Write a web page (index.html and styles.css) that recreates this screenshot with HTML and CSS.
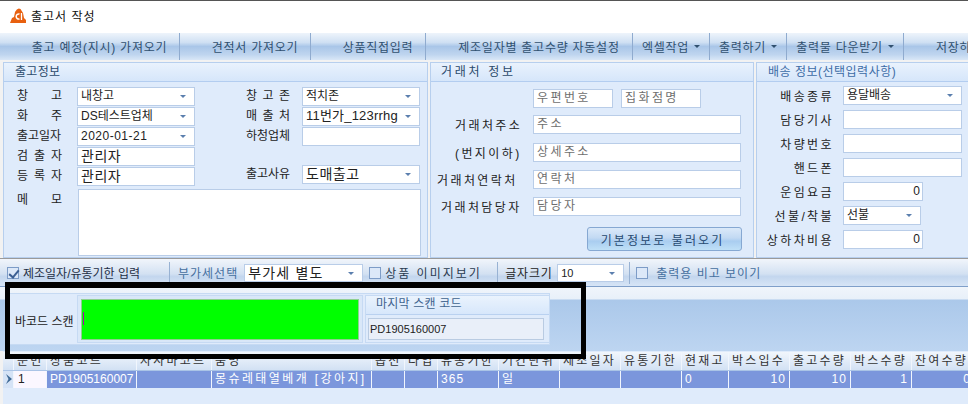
FILE: index.html
```html
<!DOCTYPE html>
<html lang="ko">
<head>
    <meta charset="UTF-8">
    <title>출고서 작성</title>
    <link rel="stylesheet" href="styles.css">
</head>
<body>
    <div class="window">
        <div class="titlebar">
            <svg class="logo" width="16" height="15" viewBox="0 0 16 15"><path d="M0 15 L2 10 L4 9 L5 4 Q7.5 -1 10.5 1 L13 5 L14 10 L16 12 L16 15 Z" fill="#e8600f"/><path d="M9.5 6 A2.6 2.6 0 1 0 9.5 11" fill="none" stroke="#fff" stroke-width="1.5"/><path d="M11.5 5 V12" stroke="#fff" stroke-width="1.3"/></svg>
            <span>출고서 작성</span>
        </div>

        <div class="toolbar">
            <div class="tool t1">출고 예정(지시) 가져오기</div>
            <div class="tool t2">견적서 가져오기</div>
            <div class="tool t3">상품직접입력</div>
            <div class="tool t4">제조일자별 출고수량 자동설정</div>
            <div class="tool t5">엑셀작업<i class="caret dark"></i></div>
            <div class="tool t5">출력하기<i class="caret dark"></i></div>
            <div class="tool t6">출력물 다운받기<i class="caret dark"></i></div>
            <div class="tool t7">저장하기</div>
        </div>

        <div class="panels">
            <section class="panel p-out">
                <h3>출고정보</h3>
                <div class="out-grid">
                    <label class="spread">창 고</label>
                    <div class="field combo">내창고<i class="caret"></i></div>
                    <label class="spread col2">창 고 존</label>
                    <div class="field combo">적치존<i class="caret"></i></div>

                    <label class="spread">화 주</label>
                    <div class="field combo">DS테스트업체<i class="caret"></i></div>
                    <label class="spread col2">매 출 처</label>
                    <div class="field combo mid">11번가_123rrhg<i class="caret"></i></div>

                    <label class="spread">출고일자</label>
                    <div class="field combo date">2020-01-21<i class="caret"></i></div>
                    <label class="spread col2">하청업체</label>
                    <div class="field"></div>

                    <label class="spread">검 출 자</label>
                    <div class="field big">관리자</div>
                    <span></span>
                    <span></span>

                    <label class="spread">등 록 자</label>
                    <div class="field big">관리자</div>
                    <label class="spread col2 up">출고사유</label>
                    <div class="field combo big up">도매출고<i class="caret"></i></div>
                </div>
                <div class="memo-row">
                    <label class="spread">메 모</label>
                    <div class="field memo"></div>
                </div>
            </section>

            <section class="panel p-cust">
                <h3 class="spaced">거래처 정보</h3>
                <div class="cust-top">
                    <div class="field hint">우편번호</div>
                    <div class="field hint">집화점명</div>
                </div>
                <div class="cust-row addr"><label class="l-addr">거래처주소</label><div class="field hint">주소</div></div>
                <div class="cust-row"><label class="l-addr">(번지이하)</label><div class="field hint">상세주소</div></div>
                <div class="cust-row"><label class="l-tel">거래처연락처</label><div class="field hint">연락처</div></div>
                <div class="cust-row"><label class="l-man">거래처담당자</label><div class="field hint">담당자</div></div>
                <div class="btn-row"><button type="button">기본정보로 불러오기</button></div>
            </section>

            <section class="panel p-ship">
                <h3 class="blue">배송 정보(선택입력사항)</h3>
                <div class="ship-row first"><label>배송종류</label><div class="field combo w-full">용달배송<i class="caret"></i></div></div>
                <div class="ship-row"><label>담당기사</label><div class="field w-full"></div></div>
                <div class="ship-row"><label>차량번호</label><div class="field w-full"></div></div>
                <div class="ship-row"><label>핸드폰</label><div class="field w-full"></div></div>
                <div class="ship-row"><label>운임요금</label><div class="field num w-short">0</div></div>
                <div class="ship-row"><label>선불/착불</label><div class="field combo w-short2">선불<i class="caret"></i></div></div>
                <div class="ship-row"><label>상하차비용</label><div class="field num w-short">0</div></div>
            </section>
        </div>

        <div class="optbar">
            <span class="check on"></span><span class="opt-a">제조일자/유통기한 입력</span>
            <span class="sep sep-a"></span>
            <span class="opt-blue">부가세선택</span>
            <div class="field combo big opt-combo">부가세 별도<i class="caret"></i></div>
            <span class="check"></span><span class="opt-b">상품 이미지보기</span>
            <span class="sep sep-b"></span>
            <span class="opt-c">글자크기</span>
            <div class="field combo size-combo">10<i class="caret"></i></div>
            <span class="sep sep-c"></span>
            <span class="check"></span><span class="opt-blue opt-d">출력용 비고 보이기</span>
        </div>

        <div class="scanbar">
            <div class="scan-box">
                <span class="scan-label">바코드 스캔</span>
                <div class="scan-input"><div class="scan-green"><i></i></div></div>
                <div class="last-scan">
                    <h4>마지막 스캔 코드</h4>
                    <div class="last-code">PD1905160007</div>
                </div>
            </div>
            <div class="black-frame"></div>
        </div>

        <div class="grid">
            <div class="g-row g-head">
                <div class="mark"></div>
                <div class="c1">순번</div><div class="c2">상품코드</div><div class="c3">자사바코드</div><div class="c4">품명</div>
                <div class="c5">옵션</div><div class="c6">타입</div><div class="c7">유통기한</div><div class="c8">기간단위</div>
                <div class="c9">제조일자</div><div class="c10">유통기한</div><div class="c11">현재고</div><div class="c12">박스입수</div>
                <div class="c13">출고수량</div><div class="c14">박스수량</div><div class="c15">잔여수량</div>
            </div>
            <div class="g-row g-data">
                <div class="mark"><svg width="8" height="10" viewBox="0 0 8 10"><path d="M1 0 L7 5 L1 10 L3.5 5 Z" fill="#3f6a96"/></svg></div>
                <div class="c1 first-cell">1</div><div class="c2">PD1905160007</div><div class="c3"></div><div class="c4">몽슈레태열베개 [강아지]</div>
                <div class="c5"></div><div class="c6"></div><div class="c7">365</div><div class="c8">일</div>
                <div class="c9"></div><div class="c10"></div><div class="c11">0</div><div class="c12 r">10</div>
                <div class="c13 r">10</div><div class="c14 r">1</div><div class="c15 r">0</div>
            </div>
        </div>
    </div>
</body>
</html>
```

FILE: styles.css
```css
* { box-sizing: border-box; }
html, body { margin: 0; padding: 0; }
body { width: 968px; height: 404px; overflow: hidden; background: #fff; font-family: "Liberation Sans", "Noto Sans CJK KR", sans-serif; font-size: 12px; color: #222; }
.window { width: 968px; height: 404px; overflow: hidden; border-top: 1px solid #555; }

.titlebar { height: 32px; display: flex; align-items: center; padding: 0 0 4px 10px; font-size: 12px; letter-spacing: 1px; color: #111; background: #fff; }
.logo { margin-right: 5px; }

.toolbar { height: 27px; display: flex; overflow: hidden; color: #30506f; font-size: 12px; background: linear-gradient(#eef4fb 0, #cfe0f3 35%, #a9c6e8 50%, #bfd5ef 80%, #d9e7f7 100%); }
.tool { flex: none; display: flex; align-items: center; justify-content: center; white-space: nowrap; letter-spacing: .75px; border-right: 1px solid #8fabcf; }
.t1 { width: 180px; padding-left: 20px; }
.t2 { width: 131px; padding-left: 20px; }
.t3 { width: 115px; padding-left: 20px; }
.t4 { width: 207px; padding-left: 20px; }
.t5 { width: 77px; }
.t6 { width: 117px; }
.t7 { width: 80px; border-right: 0; justify-content: flex-start; padding-left: 32px; }
.caret { display: inline-block; width: 0; height: 0; border: 3px solid transparent; border-top: 3px solid #5b7fae; border-bottom: 0; margin-left: 5px; }
.caret.dark { border-top-color: #30506f; }

.panels { height: 199px; display: flex; gap: 2px; padding: 2px 0 0 3px; background: #f2f2f2; border-bottom: 1px solid #9a9a9a; }
.panel { background: #dfebfb; border: 1px solid #b7cfee; flex: none; }
.panel h3 { margin: 0; height: 19px; font-size: 12px; font-weight: normal; line-height: 18px; padding-left: 11px; letter-spacing: .3px; color: #2b4a6b; background: linear-gradient(#e9f2fd, #d6e6fa); border-bottom: 1px solid #b3cdf0; }
.panel h3.spaced { letter-spacing: 2.7px; padding-left: 10px; }
.panel h3.blue { color: #3d6ca6; padding-left: 11px; letter-spacing: .5px; }
.p-out { width: 425px; }
.p-cust { width: 324px; }
.p-ship { width: 214px; }

label { white-space: nowrap; color: #222; }
.field { background: #fff; border: 1px solid #b9cde8; height: 19px; line-height: 16px; padding: 0 3px; white-space: nowrap; overflow: hidden; position: relative; color: #222; }
.combo .caret { position: absolute; right: 8px; top: 7px; margin: 0; }
.big { font-size: 14px; letter-spacing: .5px; line-height: 17px; }
.mid { font-size: 13px; letter-spacing: .2px; }
.date { letter-spacing: .5px; }
.hint { color: #6e6e6e; letter-spacing: 2.4px; line-height: 16px; }

.out-grid { display: grid; grid-template-columns: 73px 118px 107px 118px; grid-auto-rows: 20px; padding: 5px 0 0; }
.spread { display: block; width: 45px; margin-left: 13px; line-height: 18px; text-align-last: justify; }
.out-grid .col2 { width: 44px; margin-left: 51px; }
.out-grid .up { margin-top: -2px; }
.memo-row { display: flex; padding-top: 2px; }
.memo-row .spread { flex: none; margin-right: 16px; padding-top: 2px; }
.field.memo { width: 343px; height: 67px; }

.cust-top { display: flex; gap: 8px; padding: 7px 0 7px 102px; }
.cust-top .field { width: 80px; }
.cust-row { display: flex; align-items: center; height: 19px; margin-bottom: 8px; }
.cust-row.addr { margin-bottom: 9px; }
.cust-row label { flex: none; width: 102px; letter-spacing: 2.4px; }
.l-addr { padding-left: 24px; }
.l-tel { padding-left: 6px; }
.l-man { padding-left: 10px; }
.cust-row .field { width: 208px; }
.btn-row { display: flex; justify-content: flex-end; padding: 3px 11px 0 0; }
button { width: 155px; height: 24px; font: inherit; font-size: 12px; letter-spacing: 2.1px; color: #274a70; border: 1px solid #86a8d2; border-radius: 3px; background: linear-gradient(#dbe9f9, #c2d9f3 45%, #a9cdf0 60%, #bfe0f7); padding: 0 4px 0 0; }

.ship-row { display: flex; align-items: center; height: 19px; margin-bottom: 5px; }
.ship-row.first { margin-top: 4px; }
.ship-row label { width: 77px; text-align: right; letter-spacing: 2.4px; margin-right: 9px; }
.w-full { width: 119px; }
.w-short { width: 80px; }
.w-short2 { width: 78px; }
.num { text-align: right; padding-right: 2px; }

.optbar { height: 28px; display: flex; align-items: center; padding: 0 0 0 7px; white-space: nowrap; border-bottom: 1px solid #7f9fc9; background: linear-gradient(#f1f5fb, #d3e1f2 55%, #c3d6ee 65%, #d7e5f6); }
.check { flex: none; width: 12px; height: 12px; background: #dce8f8; border: 1px solid #7d9cc7; position: relative; }
.check.on::after { content: ""; position: absolute; left: 3px; top: 0; width: 4px; height: 8px; border: solid #3c5f93; border-width: 0 2px 2px 0; transform: rotate(40deg); }
.sep { flex: none; width: 1px; height: 22px; background: #98b2d3; }
.opt-a { margin-left: 4px; width: 146px; color: #1e2f45; flex: none; }
.sep-a { margin-right: 8px; }
.opt-blue { color: #456f9f; letter-spacing: 1px; flex: none; }
.opt-combo { width: 119px; margin: 0 6px; height: 18px; letter-spacing: 1.2px; }
.opt-b { margin-left: 4px; width: 112px; letter-spacing: 2px; flex: none; color: #2a3b50; }
.sep-b { margin-right: 7px; }
.opt-c { width: 52px; flex: none; color: #222; letter-spacing: .8px; }
.size-combo { width: 67px; font-size: 11px; height: 18px; }
.sep-c { margin: 0 6px 0 5px; }
.opt-d { margin-left: 8px; }

.scanbar { position: relative; height: 64px; padding-top: 6px; background: linear-gradient(#f0f5fb 0, #e8f0f9 12px, #abc8ea 13px, #bdd5f1 100%); }
.scan-box { display: flex; width: 541px; margin-left: 9px; height: 52px; background: #dfebfb; border: 1px solid #c6daf3; padding: 1px 0 0 5px; }
.scan-label { width: 62px; padding-top: 17px; flex: none; color: #222; white-space: nowrap; }
.scan-input { flex: none; width: 286px; height: 48px; padding: 3px; border: 1px solid #c6daf3; background: #d9e7f8; }
.scan-green { height: 41px; background: #0f0; border: 1px solid #8fd08f; padding: 12px 0 0 1px; }
.scan-green i { display: block; width: 1px; height: 13px; background: #b000b0; }
.last-scan { flex: none; width: 185px; height: 48px; margin-left: 2px; border: 1px solid #c6daf3; }
.last-scan h4 { margin: 0; height: 19px; font-size: 12px; font-weight: normal; line-height: 17px; padding-left: 10px; letter-spacing: .2px; color: #3f638e; background: linear-gradient(#eaf3fd, #d7e7fb); border-bottom: 1px solid #b9d1f0; }
.last-code { margin: 3px 5px 0 2px; height: 22px; line-height: 20px; padding-left: 1px; background: #e9eff9; border: 1px solid #b9cbe2; font-size: 11px; color: #222; }
.black-frame { position: absolute; left: 5px; top: -5px; width: 581px; height: 77px; border: 5px solid #000; border-top-width: 6px; pointer-events: none; }

.grid { height: 53px; padding: 1px 0 0 3px; background: linear-gradient(90deg, #f2f2f2 3px, #dfebfb 3px); overflow: hidden; }
.g-row { display: flex; width: 975px; }
.g-row > div { flex: none; border-right: 1px solid #f1f6fd; white-space: nowrap; overflow: hidden; padding-left: 3px; }
.g-head { height: 19px; line-height: 18px; background: linear-gradient(#f1f6fc, #d2e1f4); letter-spacing: 2.2px; color: #333; border-bottom: 1px solid #aac4e6; }
.g-data { height: 17px; line-height: 16px; background: #7b96dc; color: #fff; letter-spacing: 1.1px; }
.g-data .mark { background: #d5e3f6; padding: 3px 0 0 2px; line-height: 0; }
.g-data .first-cell { background: #fbf7ff; color: #222; padding-left: 4px; }
.g-data .c2 { letter-spacing: 0; }
.g-data .c4 { letter-spacing: 2.4px; }
.g-data .r { text-align: right; padding-right: 3px; }
.mark { width: 11px; }
.c1 { width: 33px; }
.c2 { width: 90px; }
.c3 { width: 75px; }
.c4 { width: 160px; }
.c5, .c6 { width: 33px; }
.c7 { width: 61px; }
.c8, .c9, .c10, .c12, .c13, .c14 { width: 61px; }
.c11 { width: 47px; }
.c15 { width: 63px; }
```
